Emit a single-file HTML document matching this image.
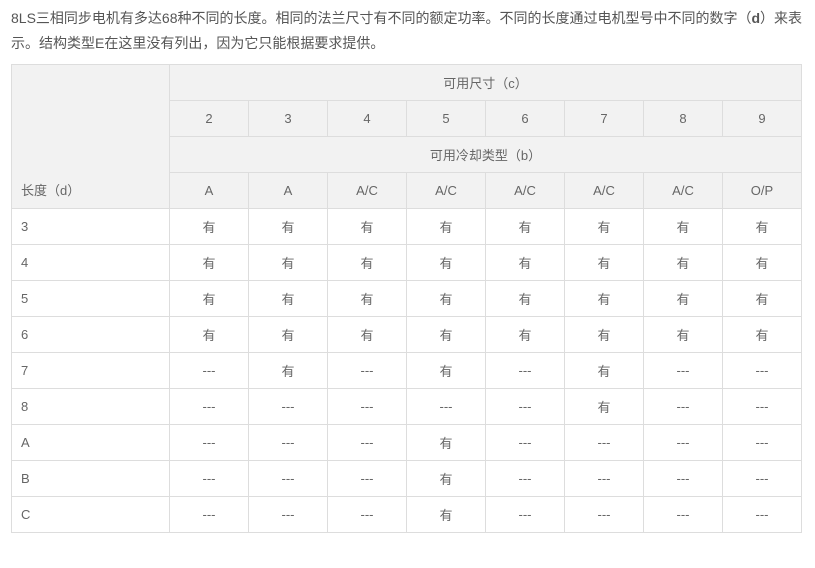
<!DOCTYPE html>
<html><head><meta charset="utf-8"><style>
body{margin:0;background:#fff;font-family:"Liberation Sans","Noto Sans CJK SC",sans-serif;color:#666;font-size:13px;}
p{position:absolute;left:11px;top:6px;margin:0;line-height:25px;color:#555;font-size:14px;white-space:nowrap;}
table{position:absolute;left:11px;top:64px;border-collapse:collapse;table-layout:fixed;width:791px;}
td{border:1px solid #ddd;height:35px;padding:0;text-align:center;color:#666;}
.h td{background:#f2f2f2;}
td.l{text-align:left;padding-left:9px;}
td.hl{background:#f2f2f2;text-align:left;padding-left:9px;vertical-align:bottom;padding-bottom:9px;}
</style></head><body>
<p>8LS三相同步电机有多达68种不同的长度。相同的法兰尺寸有不同的额定功率。不同的长度通过电机型号中不同的数字（<b>d</b>）来表<br>示。结构类型E在这里没有列出，因为它只能根据要求提供。</p>
<table>
<colgroup><col style="width:158px"><col span="8" style="width:79px"></colgroup>
<tr class="h"><td class="hl" rowspan="4">长度（d）</td><td colspan="8">可用尺寸（c）</td></tr>
<tr class="h"><td>2</td><td>3</td><td>4</td><td>5</td><td>6</td><td>7</td><td>8</td><td>9</td></tr>
<tr class="h"><td colspan="8">可用冷却类型（b）</td></tr>
<tr class="h"><td>A</td><td>A</td><td>A/C</td><td>A/C</td><td>A/C</td><td>A/C</td><td>A/C</td><td>O/P</td></tr>
<tr><td class="l">3</td><td>有</td><td>有</td><td>有</td><td>有</td><td>有</td><td>有</td><td>有</td><td>有</td></tr>
<tr><td class="l">4</td><td>有</td><td>有</td><td>有</td><td>有</td><td>有</td><td>有</td><td>有</td><td>有</td></tr>
<tr><td class="l">5</td><td>有</td><td>有</td><td>有</td><td>有</td><td>有</td><td>有</td><td>有</td><td>有</td></tr>
<tr><td class="l">6</td><td>有</td><td>有</td><td>有</td><td>有</td><td>有</td><td>有</td><td>有</td><td>有</td></tr>
<tr><td class="l">7</td><td>---</td><td>有</td><td>---</td><td>有</td><td>---</td><td>有</td><td>---</td><td>---</td></tr>
<tr><td class="l">8</td><td>---</td><td>---</td><td>---</td><td>---</td><td>---</td><td>有</td><td>---</td><td>---</td></tr>
<tr><td class="l">A</td><td>---</td><td>---</td><td>---</td><td>有</td><td>---</td><td>---</td><td>---</td><td>---</td></tr>
<tr><td class="l">B</td><td>---</td><td>---</td><td>---</td><td>有</td><td>---</td><td>---</td><td>---</td><td>---</td></tr>
<tr><td class="l">C</td><td>---</td><td>---</td><td>---</td><td>有</td><td>---</td><td>---</td><td>---</td><td>---</td></tr>
</table>
</body></html>
